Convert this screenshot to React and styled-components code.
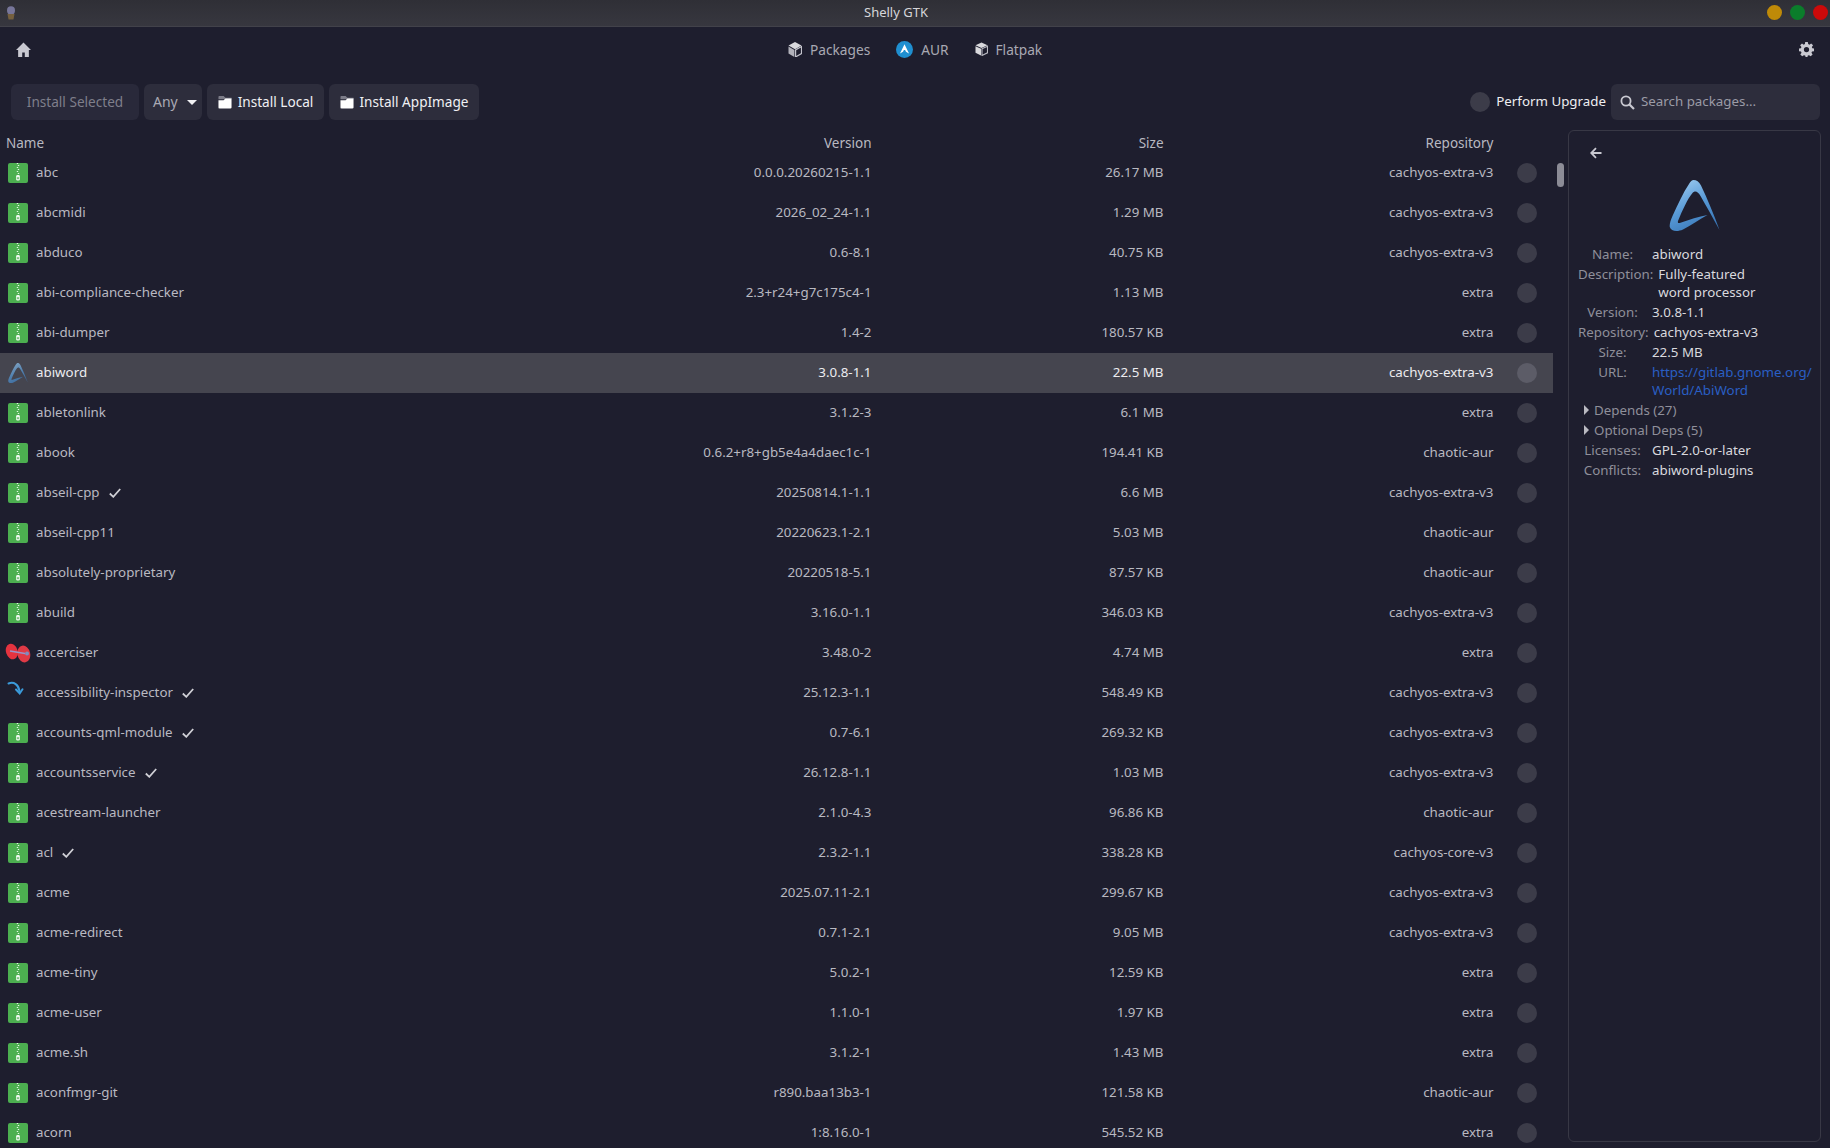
import styled, { createGlobalStyle } from "styled-components";

const GlobalStyle = createGlobalStyle`
  html, body {
    margin: 0;
    padding: 0;
    height: 100%;
    overflow: hidden;
    background: #1e1e2e;
  }
  * {
    box-sizing: border-box;
  }
`;

const packages = [
  { name: "abc", version: "0.0.0.20260215-1.1", size: "26.17 MB", repo: "cachyos-extra-v3" },
  { name: "abcmidi", version: "2026_02_24-1.1", size: "1.29 MB", repo: "cachyos-extra-v3" },
  { name: "abduco", version: "0.6-8.1", size: "40.75 KB", repo: "cachyos-extra-v3" },
  { name: "abi-compliance-checker", version: "2.3+r24+g7c175c4-1", size: "1.13 MB", repo: "extra" },
  { name: "abi-dumper", version: "1.4-2", size: "180.57 KB", repo: "extra" },
  { name: "abiword", version: "3.0.8-1.1", size: "22.5 MB", repo: "cachyos-extra-v3", icon: "abiword", selected: true },
  { name: "abletonlink", version: "3.1.2-3", size: "6.1 MB", repo: "extra" },
  { name: "abook", version: "0.6.2+r8+gb5e4a4daec1c-1", size: "194.41 KB", repo: "chaotic-aur" },
  { name: "abseil-cpp", version: "20250814.1-1.1", size: "6.6 MB", repo: "cachyos-extra-v3", installed: true },
  { name: "abseil-cpp11", version: "20220623.1-2.1", size: "5.03 MB", repo: "chaotic-aur" },
  { name: "absolutely-proprietary", version: "20220518-5.1", size: "87.57 KB", repo: "chaotic-aur" },
  { name: "abuild", version: "3.16.0-1.1", size: "346.03 KB", repo: "cachyos-extra-v3" },
  { name: "accerciser", version: "3.48.0-2", size: "4.74 MB", repo: "extra", icon: "accerciser" },
  { name: "accessibility-inspector", version: "25.12.3-1.1", size: "548.49 KB", repo: "cachyos-extra-v3", icon: "inspector", installed: true },
  { name: "accounts-qml-module", version: "0.7-6.1", size: "269.32 KB", repo: "cachyos-extra-v3", installed: true },
  { name: "accountsservice", version: "26.12.8-1.1", size: "1.03 MB", repo: "cachyos-extra-v3", installed: true },
  { name: "acestream-launcher", version: "2.1.0-4.3", size: "96.86 KB", repo: "chaotic-aur" },
  { name: "acl", version: "2.3.2-1.1", size: "338.28 KB", repo: "cachyos-core-v3", installed: true },
  { name: "acme", version: "2025.07.11-2.1", size: "299.67 KB", repo: "cachyos-extra-v3" },
  { name: "acme-redirect", version: "0.7.1-2.1", size: "9.05 MB", repo: "cachyos-extra-v3" },
  { name: "acme-tiny", version: "5.0.2-1", size: "12.59 KB", repo: "extra" },
  { name: "acme-user", version: "1.1.0-1", size: "1.97 KB", repo: "extra" },
  { name: "acme.sh", version: "3.1.2-1", size: "1.43 MB", repo: "extra" },
  { name: "aconfmgr-git", version: "r890.baa13b3-1", size: "121.58 KB", repo: "chaotic-aur" },
  { name: "acorn", version: "1:8.16.0-1", size: "545.52 KB", repo: "extra" },
];

function ZipIcon() {
  return (
    <svg width="20" height="20" viewBox="0 0 20 20">
      <rect width="20" height="20" rx="2" fill="#4caf50" />
      <path d="M8.8 0.5h1.4M9.8 2.5h1.4M8.8 4.5h1.4M9.8 6.5h1.4M8.8 8.5h1.4M9.8 10.5h1.4" stroke="#e4f2e4" strokeWidth="1" />
      <rect x="8.2" y="12" width="3.6" height="5.4" rx="1.2" fill="#f1f8f1" />
      <rect x="9.3" y="14.2" width="1.4" height="2" fill="#4caf50" />
    </svg>
  );
}

function AbiLogo({ size, faded }) {
  const id = faded ? "abiSmall" : "abiLarge";
  return (
    <svg width={size} height={size} viewBox="0 0 50 51" opacity={faded ? 0.72 : 1}>
      <defs>
        <linearGradient id={id} x1="0.1" y1="0" x2="0.6" y2="1">
          <stop offset="0" stopColor="#a3cff2" />
          <stop offset="0.55" stopColor="#5799d6" />
          <stop offset="1" stopColor="#3a78b8" />
        </linearGradient>
      </defs>
      <path
        d="M24 0C27 0 29.5 1.5 31.5 5.5C38 19 44.5 35 50 50C43.5 38 36.5 25.5 31 16C28.5 11.5 25.5 10 23 13C18 19 13 30 8.5 41C8 43 9 43.5 11 42.8C20 39.5 29 36.8 38 35C30 39.5 21 45.5 13.5 49.5C8 52 1.5 51.5 0.3 47C-0.2 44.5 1 40.5 3 36C8.5 24 13.5 13 19.5 4C21 1.5 22.5 0 24 0Z"
        fill={`url(#${id})`}
      />
    </svg>
  );
}

function AccerciserIcon() {
  return (
    <svg width="26" height="20" viewBox="0 0 26 20">
      <ellipse cx="6.8" cy="8.5" rx="5.8" ry="8" fill="#e5333f" transform="rotate(-18 6.8 8.5)" />
      <ellipse cx="18.8" cy="11" rx="6.4" ry="8.5" fill="#e03a46" transform="rotate(-12 18.8 11)" />
      <path d="M5 8L20 10.500" stroke="#9a95c9" strokeWidth="1.5" />
      <circle cx="22" cy="10.5" r="2" fill="#7f8dc0" />
    </svg>
  );
}

function InspectorIcon() {
  return (
    <svg width="20" height="20" viewBox="0 2 20 20" overflow="visible">
      <path d="M0.5 2.5C6 0.5 10.5 3.5 11.5 10" fill="none" stroke="#3b9ad9" strokeWidth="2" strokeLinecap="round" />
      <path d="M8 8.5L11.7 12.5L14.5 8.3" fill="none" stroke="#3b9ad9" strokeWidth="2" strokeLinecap="round" />
    </svg>
  );
}

function PackageIcon({ icon }) {
  if (icon === "abiword") return <AbiLogo size={20} faded />;
  if (icon === "accerciser") return <AccerciserIcon />;
  if (icon === "inspector") return <InspectorIcon />;
  return <ZipIcon />;
}

function FolderIcon() {
  return (
    <svg width="14" height="14" viewBox="0 0 15 14">
      <path d="M0.5 1.5C0.5 0.9 1 0.5 1.5 0.5H6L8 2.5H14.5V4H0.5Z" fill="#7c7c88" />
      <path d="M0.5 5H6L8 3.2H14.5V13C14.5 13.5 14 14 13.5 14H1.5C1 14 0.5 13.5 0.5 13Z" fill="#fff" />
    </svg>
  );
}

function App() {
  return (
    <Page>
      <GlobalStyle />
      <TitleBar>
        <AppGlyph viewBox="0 0 10 14" width="10" height="14">
          <ellipse cx="5" cy="4.5" rx="4" ry="4.2" fill="#77769a" />
          <path d="M1.5 8H8.5L7.5 13.5H2.5Z" fill="#75603f" />
        </AppGlyph>
        <WindowTitle>Shelly GTK</WindowTitle>
        <WindowDots>
          <WindowDot color="#bf8a08" />
          <WindowDot color="#0b7d2b" />
          <WindowDot color="#cc0a0a" />
        </WindowDots>
      </TitleBar>

      <NavBar>
        <NavIcon viewBox="0 0 14 14" width="15" height="15" fill="#c9c9d1">
          <path d="M7 0.5L0 7.5H2V14H5.8V9.8H8.2V14H12V7.5H14Z" />
        </NavIcon>
        <NavTabs>
          <NavTab>
            <svg width="14" height="15" viewBox="0 0 14 15">
              <path d="M7 0L13.5 3.6L7 7.2L0.5 3.6Z" fill="#dadade" />
              <path d="M0.5 4.6L6.4 7.9V15L0.5 11.5Z" fill="#b2b2ba" />
              <path d="M13.5 4.6L7.6 7.9V15L13.5 11.5Z" fill="none" stroke="#c4c4cc" strokeWidth="1.2" />
            </svg>
            <TabLabel>Packages</TabLabel>
          </NavTab>
          <NavTab>
            <svg width="17" height="17" viewBox="0 0 17 17">
              <circle cx="8.5" cy="8.5" r="8.5" fill="#1f8fd0" />
              <path d="M8.5 3.2L13 12.6C11.6 11.5 10.6 11 9.9 10.7C9.7 9.6 9.2 9 8.5 9C7.8 9 7.3 9.6 7.1 10.7C6.4 11 5.4 11.5 4 12.6Z" fill="#fff" />
            </svg>
            <TabLabel>AUR</TabLabel>
          </NavTab>
          <NavTab>
            <svg width="13" height="14" viewBox="0 0 13 14">
              <path d="M6.5 0.5L12.5 3.2L6.5 6L0.5 3.2Z" fill="#d8d8dc" />
              <path d="M0.5 4.2L6 6.8V13.5L0.5 10.8Z" fill="#d8d8dc" />
              <path d="M12.5 4.2L7 6.8V13.5L12.5 10.8Z" fill="none" stroke="#bbbbc3" strokeWidth="1.1" />
            </svg>
            <TabLabel>Flatpak</TabLabel>
          </NavTab>
        </NavTabs>
        <NavIcon viewBox="0 0 16 16" width="15" height="15" fill="#c9c9d1">
          <path
            fillRule="evenodd"
            d="M6.6 0H9.4L9.8 2.2L11.1 2.8L13 1.5L15 3.5L13.7 5.4L14.2 6.6L16 7V9.9L13.9 10.2L13.3 11.5L14.5 13.3L12.5 15.3L10.7 14L9.4 14.5L9 16H7L6.6 14.5L5.2 14L3.4 15.3L1.4 13.3L2.7 11.5L2.1 10.2L0 9.9V7L2 6.6L2.6 5.3L1.2 3.5L3.2 1.5L5 2.8L6.3 2.2ZM8 5.2A2.8 2.8 0 1 0 8 10.8A2.8 2.8 0 1 0 8 5.2Z"
          />
        </NavIcon>
      </NavBar>

      <Toolbar>
        <ToolButton disabled $width={128}>
          Install Selected
        </ToolButton>
        <AnySelect>
          <ButtonText>Any</ButtonText>
          <Caret />
        </AnySelect>
        <ToolButton $width={117}>
          <FolderIcon />
          <ButtonText>Install Local</ButtonText>
        </ToolButton>
        <ToolButton $width={150}>
          <FolderIcon />
          <ButtonText>Install AppImage</ButtonText>
        </ToolButton>
        <UpgradeLabel>
          <Toggle />
          <ButtonText>Perform Upgrade</ButtonText>
        </UpgradeLabel>
        <SearchBox>
          <svg width="15" height="15" viewBox="0 0 15 15" fill="none" stroke="#c9c9d1" strokeWidth="1.8">
            <circle cx="6" cy="6" r="4.6" />
            <path d="M9.5 9.5L14 14" strokeWidth="2.2" />
          </svg>
          <SearchPlaceholder>Search packages...</SearchPlaceholder>
        </SearchBox>
      </Toolbar>

      <Content>
        <ListColumn>
          <HeaderRow>
            <HeadName>Name</HeadName>
            <HeadCell>Version</HeadCell>
            <HeadCell>Size</HeadCell>
            <HeadCell>Repository</HeadCell>
          </HeaderRow>
          <Rows>
            {packages.map((pkg) => (
              <Row key={pkg.name} $selected={pkg.selected}>
                <NameCell>
                  <IconSlot>
                    <PackageIcon icon={pkg.icon} />
                  </IconSlot>
                  <NameText>{pkg.name}</NameText>
                  {pkg.installed && (
                    <InstalledMark viewBox="0 0 12 10" width="12" height="10">
                      <path d="M0.8 5.5L4.3 8.8L11.2 1" fill="none" stroke="#cfcfd5" strokeWidth="1.8" />
                    </InstalledMark>
                  )}
                </NameCell>
                <Cell>{pkg.version}</Cell>
                <Cell>{pkg.size}</Cell>
                <Cell>{pkg.repo}</Cell>
                <RowToggle $selected={pkg.selected} />
              </Row>
            ))}
          </Rows>
        </ListColumn>
        <ScrollTrack>
          <ScrollThumb />
        </ScrollTrack>

        <DetailPanel>
          <BackButton viewBox="0 0 12 12" width="12" height="12" fill="none" stroke="#c9c9d1" strokeWidth="1.8">
            <path d="M11.5 6H1.5M6 1.2L1.2 6L6 10.8" />
          </BackButton>
          <LogoSlot>
            <AbiLogo size={51} />
          </LogoSlot>
          <DetailRow>
            <DetailLabel>Name:</DetailLabel>
            <DetailValue>abiword</DetailValue>
          </DetailRow>
          <DetailRow>
            <DetailLabel>Description:</DetailLabel>
            <DetailValue>
              Fully-featured
              <br />
              word processor
            </DetailValue>
          </DetailRow>
          <DetailRow>
            <DetailLabel>Version:</DetailLabel>
            <DetailValue>3.0.8-1.1</DetailValue>
          </DetailRow>
          <DetailRow>
            <DetailLabel>Repository:</DetailLabel>
            <DetailValue>cachyos-extra-v3</DetailValue>
          </DetailRow>
          <DetailRow>
            <DetailLabel>Size:</DetailLabel>
            <DetailValue>22.5 MB</DetailValue>
          </DetailRow>
          <DetailRow>
            <DetailLabel>URL:</DetailLabel>
            <DetailLink>
              https://gitlab.gnome.org/
              <br />
              World/AbiWord
            </DetailLink>
          </DetailRow>
          <Expander>
            <ExpanderArrow />
            Depends (27)
          </Expander>
          <Expander>
            <ExpanderArrow />
            Optional Deps (5)
          </Expander>
          <DetailRow>
            <DetailLabel>Licenses:</DetailLabel>
            <DetailValue>GPL-2.0-or-later</DetailValue>
          </DetailRow>
          <DetailRow>
            <DetailLabel>Conflicts:</DetailLabel>
            <DetailValue>abiword-plugins</DetailValue>
          </DetailRow>
        </DetailPanel>
      </Content>
    </Page>
  );
}

export default App;

const Page = styled.div`
  display: flex;
  flex-direction: column;
  width: 1830px;
  height: 1148px;
  overflow: hidden;
  background: #1e1e2e;
  color: #b9b9c1;
  font-family: "Noto Sans", "Liberation Sans", sans-serif;
  font-size: 13.33px;
`;

const TitleBar = styled.div`
  position: relative;
  display: flex;
  align-items: center;
  justify-content: space-between;
  flex: 0 0 27px;
  padding: 0 2px 1px 6px;
  background: linear-gradient(#2f2f36, #37373f);
  border-bottom: 1px solid #42424a;
`;

const AppGlyph = styled.svg`
  display: block;
`;

const WindowTitle = styled.div`
  position: absolute;
  left: 864px;
  top: 3px;
  color: #d6d6da;
  font-size: 13px;
`;

const WindowDots = styled.div`
  display: flex;
  gap: 8px;
`;

const WindowDot = styled.span`
  width: 15px;
  height: 15px;
  border-radius: 50%;
  background: ${({ color }) => color};
`;

const NavBar = styled.div`
  position: relative;
  display: flex;
  align-items: center;
  justify-content: space-between;
  flex: 0 0 46px;
  padding: 0 16px 2px;
`;

const NavIcon = styled.svg`
  display: block;
`;

const NavTabs = styled.div`
  position: absolute;
  left: 788px;
  top: 0;
  bottom: 2px;
  display: flex;
  align-items: center;
  gap: 26px;
  font-size: 13.7px;
`;

const NavTab = styled.div`
  display: flex;
  align-items: center;
  gap: 8px;
`;

const TabLabel = styled.span`
  color: #a9a9b3;
`;

const Toolbar = styled.div`
  display: flex;
  align-items: center;
  flex: 0 0 36px;
  gap: 5px;
  margin-top: 11px;
  padding: 0 10px 0 11px;
`;

const ButtonText = styled.span`
  padding-bottom: 2px;
`;

const ToolButton = styled.button`
  display: flex;
  align-items: center;
  justify-content: center;
  gap: 6px;
  width: ${({ $width }) => $width}px;
  height: 36px;
  padding: 0 0 ${({ disabled }) => (disabled ? "2px" : "0")};
  border: none;
  border-radius: 6px;
  background: ${({ disabled }) => (disabled ? "#29293a" : "#2d2d3c")};
  color: ${({ disabled }) => (disabled ? "#7f7f8b" : "#f0f0f3")};
  font: inherit;
  font-size: 13.6px;
`;

const AnySelect = styled.div`
  display: flex;
  align-items: center;
  justify-content: space-between;
  width: 58px;
  height: 36px;
  padding: 0 5px 0 9px;
  border-radius: 6px;
  background: #2d2d3c;
  color: #a9a9b3;
  font-size: 14px;
`;

const Caret = styled.span`
  width: 0;
  height: 0;
  border-left: 5px solid transparent;
  border-right: 5px solid transparent;
  border-top: 5px solid #f0f0f3;
`;

const UpgradeLabel = styled.div`
  display: flex;
  align-items: center;
  gap: 6px;
  margin-left: auto;
  color: #eeeef1;
`;

const Toggle = styled.span`
  width: 20px;
  height: 20px;
  border-radius: 50%;
  background: #3c3c49;
`;

const SearchBox = styled.div`
  display: flex;
  align-items: center;
  gap: 6px;
  width: 209px;
  height: 36px;
  padding: 0 8px 0 9px;
  border-radius: 6px;
  background: #2d2d3c;
`;

const SearchPlaceholder = styled.span`
  padding-bottom: 2px;
  color: #9b9ba6;
`;

const Content = styled.div`
  display: flex;
  flex: 1;
  min-height: 0;
  margin-top: 10px;
  padding-right: 9px;
`;

const ListColumn = styled.div`
  display: flex;
  flex-direction: column;
  flex: 0 0 1553px;
  min-height: 0;
`;

const HeaderRow = styled.div`
  display: grid;
  grid-template-columns: 560px 311.5px 292px 330px;
  align-items: center;
  flex: 0 0 23px;
  padding-top: 2px;
  font-size: 13.5px;
`;

const HeadCell = styled.div`
  text-align: right;
  color: #b9b9c1;
`;

const HeadName = styled(HeadCell)`
  padding-left: 6px;
  text-align: left;
`;

const Rows = styled.div`
  flex: 1;
  overflow: hidden;
`;

const Row = styled.div`
  display: grid;
  grid-template-columns: 560px 311.5px 292px 330px 1fr;
  align-items: center;
  height: 40px;
  background: ${({ $selected }) => ($selected ? "#45454f" : "transparent")};
  color: ${({ $selected }) => ($selected ? "#ececef" : "#b9b9c1")};
`;

const NameCell = styled.div`
  display: flex;
  align-items: center;
  padding-left: 6px;
`;

const NameText = styled.span`
  padding-bottom: 2px;
`;

const IconSlot = styled.span`
  display: flex;
  align-items: center;
  justify-content: center;
  width: 24px;
  height: 20px;
  margin-right: 6px;

  svg {
    flex: none;
  }
`;

const InstalledMark = styled.svg`
  margin-left: 9px;
`;

const Cell = styled.div`
  padding-bottom: 2px;
  text-align: right;
`;

const RowToggle = styled.span`
  justify-self: start;
  width: 20px;
  height: 20px;
  margin-left: 23.5px;
  border-radius: 50%;
  background: ${({ $selected }) => ($selected ? "#5c5c67" : "#3c3c49")};
`;

const ScrollTrack = styled.div`
  flex: 0 0 7px;
  margin-left: 4px;
  padding-top: 33px;
`;

const ScrollThumb = styled.div`
  height: 24px;
  border-radius: 4px;
  background: #8c8c96;
`;

const DetailPanel = styled.div`
  display: flex;
  flex-direction: column;
  flex: 0 0 252px;
  height: 1012px;
  margin-left: 4px;
  padding: 16px 8px 0 9px;
  border: 1px solid #383845;
  border-radius: 6px;
`;

const BackButton = styled.svg`
  display: block;
  margin-left: 12px;
`;

const LogoSlot = styled.div`
  display: flex;
  justify-content: center;
  margin: 21px 1px 14px 0;
`;

const DetailRow = styled.div`
  display: flex;
  align-items: flex-start;
  gap: 5px;
  margin-bottom: 2px;
  line-height: 18px;
`;

const DetailLabel = styled.span`
  flex: none;
  min-width: 69px;
  text-align: center;
  color: #8f8f9a;
`;

const DetailValue = styled.span`
  color: #d9d9de;
`;

const DetailLink = styled(DetailValue)`
  color: #2a5fc4;
`;

const Expander = styled.div`
  display: flex;
  align-items: center;
  gap: 5px;
  margin-bottom: 2px;
  padding-left: 6px;
  line-height: 18px;
  color: #8f8f9a;
`;

const ExpanderArrow = styled.span`
  width: 0;
  height: 0;
  border-top: 5px solid transparent;
  border-bottom: 5px solid transparent;
  border-left: 5px solid #b9b9c1;
`;
